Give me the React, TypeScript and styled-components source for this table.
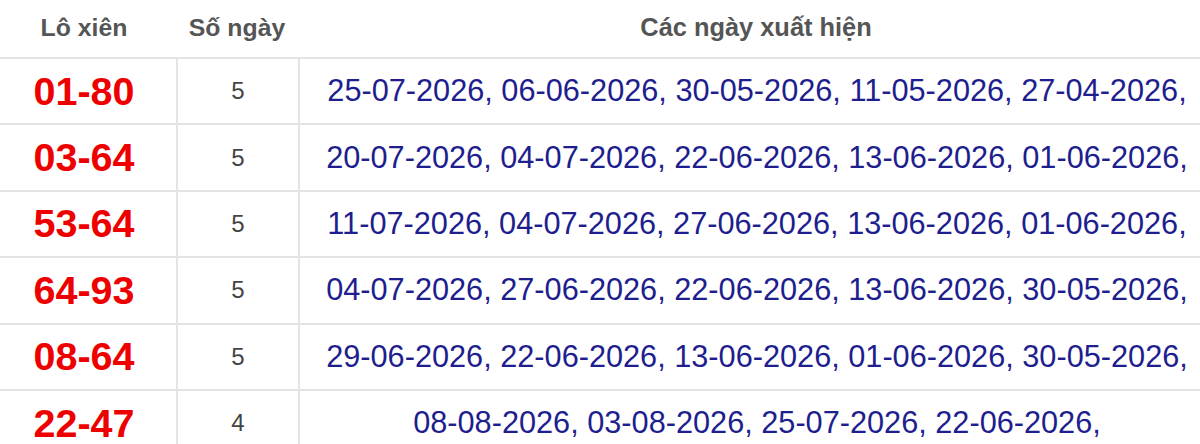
import React from "react";
import styled, { createGlobalStyle } from "styled-components";

const GlobalStyle = createGlobalStyle`
  html, body {
    margin: 0;
    padding: 0;
    background: #ffffff;
    overflow: hidden;
  }
  body {
    font-family: "Liberation Sans", Arial, sans-serif;
  }
`;

const Table = styled.div`
  width: 1200px;
  display: grid;
  grid-template-columns: 176px 122px 1fr;
  grid-auto-rows: 66.4px;
  grid-template-rows: 57px;
  background: #ffffff;
`;

const HeadCell = styled.div<{ $shift?: number }>`
  display: flex;
  align-items: center;
  justify-content: center;
  color: #555555;
  font-size: ${(p) => (p.$shift && p.$shift > 0 ? "25.4px" : "24.8px")};
  font-weight: bold;
  padding-bottom: 2px;
  padding-left: ${(p) => (p.$shift && p.$shift > 0 ? p.$shift : 0)}px;
  padding-right: ${(p) => (p.$shift && p.$shift < 0 ? -p.$shift : 0)}px;
  box-sizing: border-box;
`;

const Cell = styled.div<{ $first?: boolean }>`
  display: flex;
  align-items: center;
  justify-content: center;
  box-sizing: border-box;
  border-top: 2px solid #e4e4e4;
  border-left: ${(p) => (p.$first ? "none" : "2px solid #e4e4e4")};
  padding-right: ${(p) => (p.$first ? "8px" : "0")};
  white-space: nowrap;
`;

const Pair = styled.span`
  color: #ee0000;
  font-size: 39.5px;
  font-weight: bold;
`;

const Count = styled.span`
  color: #444444;
  font-size: 24px;
`;

const Dates = styled.span`
  color: #1e1e8e;
  font-size: 30.7px;
  padding-left: 14px;
`;

const rows = [
  { pair: "01-80", count: 5, dates: ["25-07-2026", "06-06-2026", "30-05-2026", "11-05-2026", "27-04-2026"] },
  { pair: "03-64", count: 5, dates: ["20-07-2026", "04-07-2026", "22-06-2026", "13-06-2026", "01-06-2026"] },
  { pair: "53-64", count: 5, dates: ["11-07-2026", "04-07-2026", "27-06-2026", "13-06-2026", "01-06-2026"] },
  { pair: "64-93", count: 5, dates: ["04-07-2026", "27-06-2026", "22-06-2026", "13-06-2026", "30-05-2026"] },
  { pair: "08-64", count: 5, dates: ["29-06-2026", "22-06-2026", "13-06-2026", "01-06-2026", "30-05-2026"] },
  { pair: "22-47", count: 4, dates: ["08-08-2026", "03-08-2026", "25-07-2026", "22-06-2026"] },
];

export default function App() {
  return (
    <>
      <GlobalStyle />
      <Table>
        <HeadCell $shift={-8}>Lô xiên</HeadCell>
        <HeadCell>Số ngày</HeadCell>
        <HeadCell $shift={14}>Các ngày xuất hiện</HeadCell>
        {rows.map((r) => (
          <React.Fragment key={r.pair}>
            <Cell $first>
              <Pair>{r.pair}</Pair>
            </Cell>
            <Cell>
              <Count>{r.count}</Count>
            </Cell>
            <Cell>
              <Dates>{r.dates.map((d) => d + ",").join(" ")}</Dates>
            </Cell>
          </React.Fragment>
        ))}
      </Table>
    </>
  );
}
